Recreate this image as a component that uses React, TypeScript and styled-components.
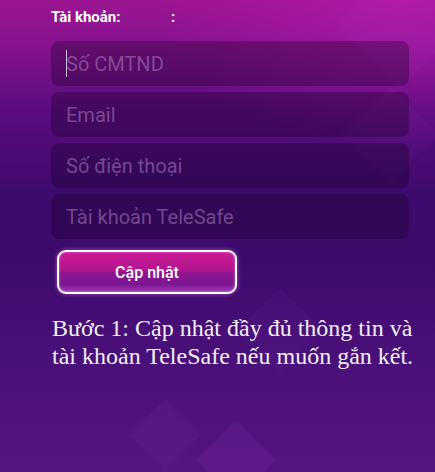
import React from "react";
import styled, { createGlobalStyle } from "styled-components";

const Global = createGlobalStyle`
  html, body { margin: 0; padding: 0; background: #3c0a6c; }
  * { box-sizing: border-box; }
`;

const Page = styled.div`
  position: relative;
  width: 435px;
  height: 472px;
  overflow: hidden;
  padding: 8px 0 0 51px;
  background:
    radial-gradient(ellipse 240px 150px at 400px 0px, rgba(200, 30, 190, 0.45), rgba(200, 30, 190, 0) 100%),
    linear-gradient(180deg, #9c1590 0px, #8a1390 40px, #5a0c7e 110px, #3f0a6e 190px, #3e0a6c 260px, #4a107a 360px, #561580 472px);
  font-family: Roboto, "Noto Sans", sans-serif;
`;

const Diamond = styled.div<{ $size: number; $op: number }>`
  position: absolute;
  width: ${(p) => p.$size}px;
  height: ${(p) => p.$size}px;
  transform: rotate(45deg);
  background: rgba(190, 90, 230, ${(p) => p.$op});
  pointer-events: none;
`;

const Content = styled.div`
  position: relative;
  display: flex;
  flex-direction: column;
`;

const HeaderRow = styled.div`
  display: flex;
  align-items: baseline;
  color: #ffffff;
  font-size: 15px;
  font-weight: 700;
  line-height: 18px;
`;

const HeaderLabel = styled.span`
  width: 120px;
`;

const Fields = styled.div`
  display: flex;
  flex-direction: column;
  gap: 6px;
  margin-top: 15px;
  width: 358px;
`;

const FieldWrap = styled.div`
  position: relative;
`;

const Field = styled.input`
  display: block;
  width: 100%;
  height: 45px;
  border: none;
  outline: none;
  border-radius: 8px;
  background: rgba(22, 0, 34, 0.32);
  padding: 0 0 0 15px;
  font-family: Roboto, "Noto Sans", sans-serif;
  font-size: 20px;
  color: #fff;
  &::placeholder {
    color: rgba(170, 130, 190, 0.55);
  }
`;

const Caret = styled.span`
  position: absolute;
  left: 15px;
  top: 9px;
  width: 1px;
  height: 27px;
  background: rgba(220, 210, 235, 0.9);
`;

const UpdateButton = styled.button`
  margin: 11px 0 0 6px;
  width: 180px;
  height: 44px;
  border: 2px solid #ffffff;
  border-radius: 9px;
  background: linear-gradient(
    180deg,
    #cc1896 0%,
    #b3168f 45%,
    #8e1590 52%,
    #7a1690 80%,
    #a035b8 100%
  );
  box-shadow: 0 0 4px rgba(255, 160, 255, 0.5), inset 0 0 3px rgba(255, 200, 255, 0.5);
  color: #ffffff;
  font-family: Roboto, "Noto Sans", sans-serif;
  font-size: 16px;
  font-weight: 500;
  cursor: pointer;
`;

const Note = styled.p`
  margin: 20px 0 0 1px;
  color: #f2eef6;
  font-family: "Liberation Serif", "Times New Roman", serif;
  font-size: 24px;
  line-height: 28px;
`;

export default function App() {
  return (
    <>
      <Global />
      <Page>
        <Diamond $size={90} $op={0.05} style={{ left: 355, top: -20 }} />
        <Diamond $size={70} $op={0.04} style={{ left: 355, top: 100 }} />
        <Diamond $size={60} $op={0.04} style={{ left: 250, top: 300 }} />
        <Diamond $size={50} $op={0.05} style={{ left: 140, top: 410 }} />
        <Diamond $size={56} $op={0.08} style={{ left: 208, top: 432 }} />
        <Content>
          <HeaderRow>
            <HeaderLabel>Tài khoản:</HeaderLabel>
            <span>:</span>
          </HeaderRow>
          <Fields>
            <FieldWrap>
              <Field placeholder="Số CMTND" />
              <Caret />
            </FieldWrap>
            <FieldWrap>
              <Field placeholder="Email" />
            </FieldWrap>
            <FieldWrap>
              <Field placeholder="Số điện thoại" />
            </FieldWrap>
            <FieldWrap>
              <Field placeholder="Tài khoản TeleSafe" />
            </FieldWrap>
          </Fields>
          <div>
            <UpdateButton>Cập nhật</UpdateButton>
          </div>
          <Note>
            Bước 1: Cập nhật đầy đủ thông tin và
            <br />
            tài khoản TeleSafe nếu muốn gắn kết.
          </Note>
        </Content>
      </Page>
    </>
  );
}
